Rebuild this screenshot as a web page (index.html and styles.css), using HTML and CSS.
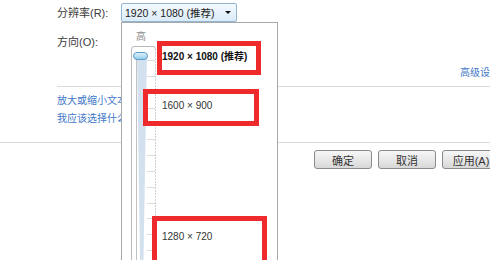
FILE: index.html
```html
<!DOCTYPE html>
<html lang="zh-CN">
<head>
  <meta charset="UTF-8">
  <title>屏幕分辨率</title>
  <link rel="stylesheet" href="styles.css">
</head>
<body>
  <div class="window">
    <div class="settings">
      <div class="res-row">
        <span class="label">分辨率(R):</span>
        <div class="combo">
          <span class="combo-text">1920 × 1080 (推荐)</span>
          <span class="combo-arrow"></span>
        </div>
      </div>
      <div class="orient-row">
        <span class="label">方向(O):</span>
      </div>
      <div class="adv-row">
        <a class="link">高级设</a>
      </div>
      <div class="sep"></div>
      <div class="links">
        <a class="link">放大或缩小文本</a>
        <a class="link">我应该选择什么</a>
      </div>
    </div>
    <div class="sep full"></div>
    <div class="buttons">
      <button class="btn">确定</button>
      <button class="btn">取消</button>
      <button class="btn">应用(A)</button>
    </div>

    <!-- opened resolution list -->
    <div class="dropdown">
      <div class="slider-col">
        <div class="slider-top">高</div>
        <svg class="slider" width="26" height="214" viewBox="0 0 26 214">
          <defs>
            <linearGradient id="thumbFill" x1="0" y1="0" x2="0" y2="1">
              <stop offset="0" stop-color="#e4f4fd"/>
              <stop offset="1" stop-color="#8fcaeb"/>
            </linearGradient>
          </defs>
          <path d="M0.5 214 V3 Q0.5 0.5 3 0.5 H22 Q24.5 0.5 24.5 3" fill="none" stroke="#b9b9b9"/>
          <line x1="24.5" y1="3" x2="24.5" y2="214" stroke="#cfcfcf" stroke-dasharray="2 1"/>
          <line x1="5.5" y1="8" x2="5.5" y2="214" stroke="#c2c2c2"/>
          <polygon points="6,8 16,8 12.5,214 9,214" fill="#d3e1ee"/>
          <g stroke="#dcdcdc">
            <line x1="16" y1="14.5" x2="24" y2="14.5"/>
            <line x1="16" y1="30.5" x2="24" y2="30.5"/>
            <line x1="16" y1="46.5" x2="24" y2="46.5"/>
            <line x1="16" y1="62.5" x2="24" y2="62.5"/>
            <line x1="16" y1="78.5" x2="24" y2="78.5"/>
            <line x1="16" y1="93.5" x2="24" y2="93.5"/>
            <line x1="16" y1="109.5" x2="24" y2="109.5"/>
            <line x1="16" y1="125.5" x2="24" y2="125.5"/>
            <line x1="16" y1="141.5" x2="24" y2="141.5"/>
            <line x1="16" y1="157.5" x2="24" y2="157.5"/>
            <line x1="16" y1="172.5" x2="24" y2="172.5"/>
            <line x1="16" y1="188.5" x2="24" y2="188.5"/>
            <line x1="16" y1="204.5" x2="24" y2="204.5"/>
          </g>
          <rect x="2.5" y="6.5" width="14" height="7" rx="3.5" fill="url(#thumbFill)" stroke="#5c9ccb"/>
        </svg>
      </div>
      <div class="options">
        <div class="option current">1920 × 1080 (推荐)</div>
        <div class="option mid">1600 × 900</div>
        <div class="option low">1280 × 720</div>
      </div>
      <div class="mark mark-1"></div>
      <div class="mark mark-2"></div>
      <div class="mark mark-3"></div>
    </div>
  </div>
</body>
</html>
```

FILE: styles.css
```css
body {
  margin: 0;
  padding: 0;
  background-color: #ffffff;
  font-family: "Liberation Sans", "Noto Sans CJK SC", sans-serif;
  color: #333;
}
.window {
  position: relative;
  width: 490px;
  height: 260px;
  overflow: hidden;
  font-size: 11px;
}
.settings {
  padding-left: 57px;
}
.res-row {
  display: flex;
  align-items: center;
  margin-top: 2px;
  height: 20px;
}
.label {
  width: 64px;
  flex-shrink: 0;
  color: #3a3a3a;
}
.combo {
  box-sizing: border-box;
  width: 116px;
  height: 19px;
  border: 1px solid #93b5d4;
  border-radius: 2px;
  background: linear-gradient(#f4faff, #dbebf8);
  display: flex;
  align-items: center;
  justify-content: space-between;
  padding: 0 5px 0 3px;
}
.combo-text {
  font-size: 10.5px;
  color: #222;
}
.combo-arrow {
  width: 0;
  height: 0;
  border-left: 3px solid transparent;
  border-right: 3px solid transparent;
  border-top: 3px solid #111;
}
.orient-row {
  margin-top: 10px;
  line-height: 20px;
}
.adv-row {
  margin-top: 10px;
  line-height: 20px;
  text-align: right;
}
.link {
  color: #4277c9;
  font-size: 10px;
  white-space: nowrap;
}
.sep {
  height: 1px;
  background-color: #dadada;
  margin-top: 3px;
}
.links {
  display: flex;
  flex-direction: column;
  width: 64px;
  overflow: hidden;
  margin-top: 5px;
  line-height: 18px;
}
.sep.full {
  margin-top: 14px;
}
.buttons {
  display: flex;
  justify-content: flex-end;
  gap: 6px;
  margin-top: 7px;
  margin-right: -10px;
}
.btn {
  box-sizing: border-box;
  width: 58px;
  height: 19px;
  padding: 0;
  border: 1px solid #8a8a8a;
  border-radius: 3px;
  background: linear-gradient(#f6f6f6 0%, #e8e8e8 50%, #d8d8d8 100%);
  font-family: inherit;
  font-size: 11px;
  color: #333;
}
.dropdown {
  position: absolute;
  left: 121px;
  top: 22px;
  width: 157px;
  height: 250px;
  box-sizing: border-box;
  border: 1px solid #a8a8a8;
  border-bottom: none;
  background-color: #ffffff;
  display: flex;
}
.slider-col {
  margin-left: 9px;
  width: 26px;
  display: flex;
  flex-direction: column;
}
.slider-top {
  margin-top: 8px;
  padding-left: 5px;
  font-size: 10px;
  line-height: 12px;
  color: #8c8c8c;
}
.slider {
  display: block;
  margin-top: 3px;
}
.options {
  margin-left: 5px;
  display: flex;
  flex-direction: column;
  font-size: 10px;
  line-height: 16px;
  color: #333;
}
.option {
  white-space: nowrap;
}
.option.current {
  margin-top: 26px;
  font-weight: bold;
  color: #111;
}
.option.mid {
  margin-top: 33px;
}
.option.low {
  margin-top: 115px;
}
.mark {
  position: absolute;
  box-sizing: border-box;
  border: 5px solid #ee2a2d;
}
.mark-1 {
  left: 35px;
  top: 18px;
  width: 104px;
  height: 34px;
}
.mark-2 {
  left: 21px;
  top: 66px;
  width: 116px;
  height: 37px;
}
.mark-3 {
  left: 30px;
  top: 193px;
  width: 115px;
  height: 60px;
}
```
